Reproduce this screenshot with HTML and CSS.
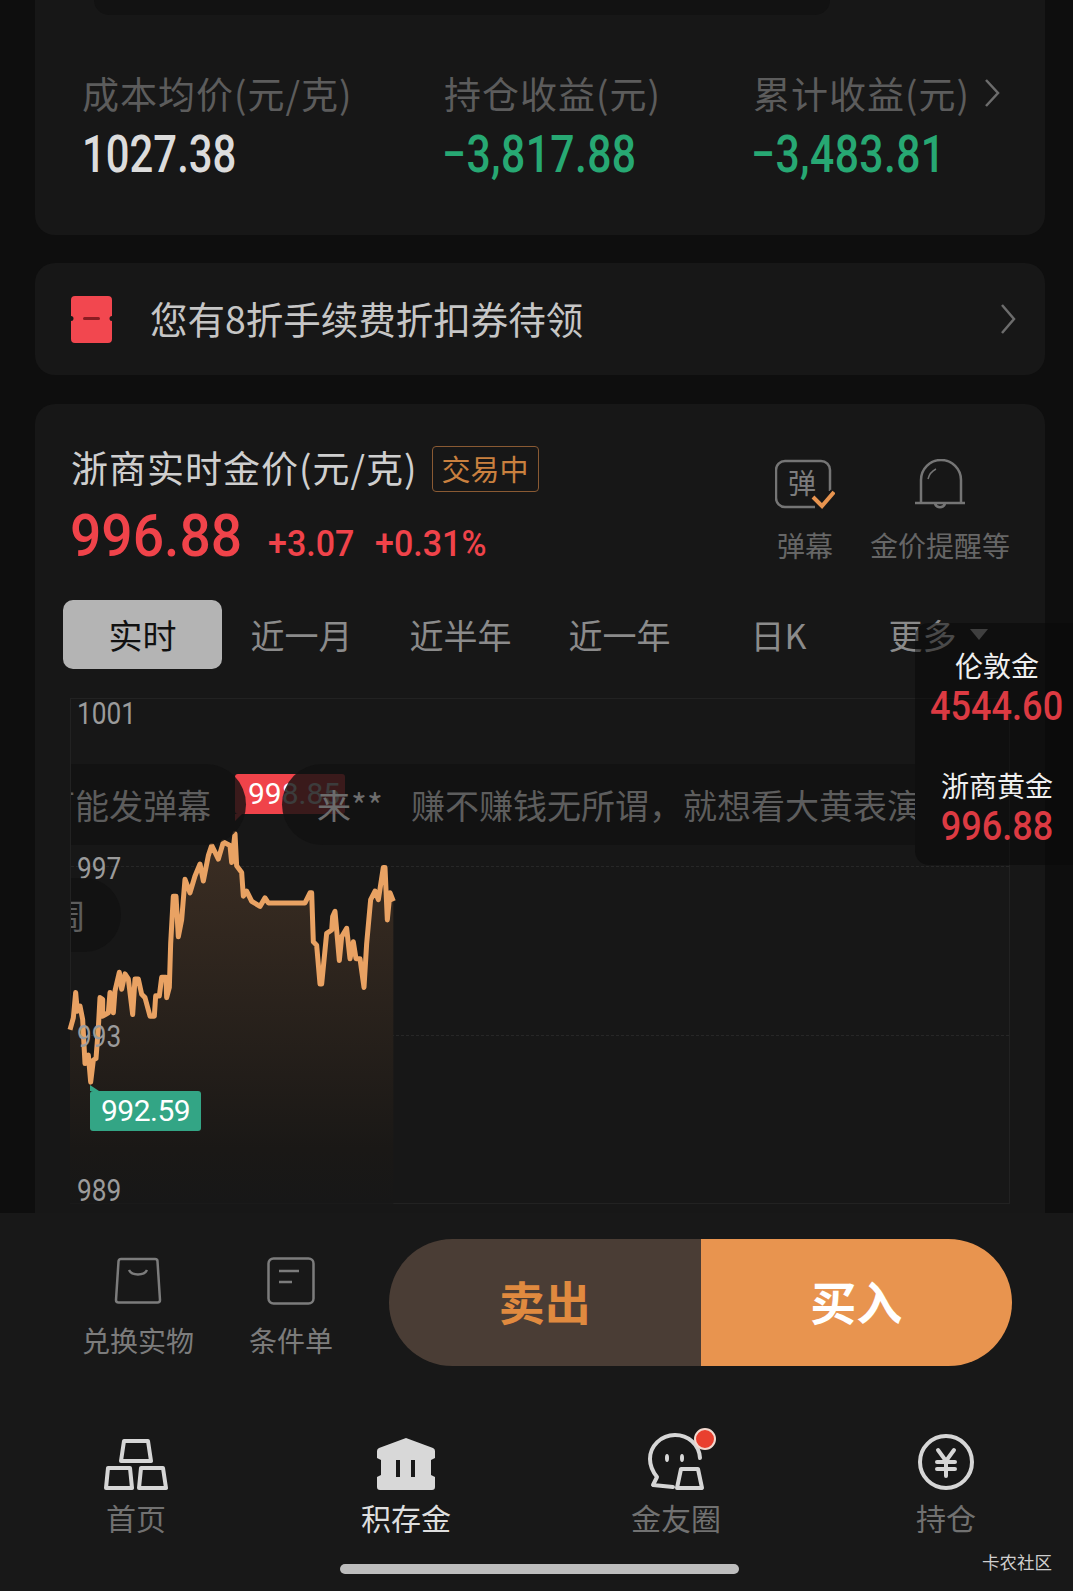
FILE: index.html
```html
<!DOCTYPE html>
<html lang="zh-CN">
<head>
  <meta charset="UTF-8">
  <meta name="viewport" content="width=device-width, initial-scale=1.0">
  <title>积存金</title>
  <link rel="stylesheet" href="styles.css">
</head>
<body>
<div class="page">

  <!-- holdings summary -->
  <div class="card summary">
    <div class="summary-top"></div>
    <div class="stats">
      <div class="stat">
        <p class="stat-label">成本均价(元/克)</p>
        <p class="stat-value"><span class="num">1027.38</span></p>
      </div>
      <div class="stat">
        <p class="stat-label">持仓收益(元)</p>
        <p class="stat-value green"><span class="num">−3,817.88</span></p>
      </div>
      <div class="stat">
        <p class="stat-label">累计收益(元)
          <svg class="stat-arrow" viewBox="0 0 16 28"><path d="M2 1l12 13L2 27"/></svg>
        </p>
        <p class="stat-value green"><span class="num">−3,483.81</span></p>
      </div>
    </div>
  </div>

  <!-- coupon banner -->
  <div class="card banner">
    <svg class="coupon" viewBox="0 0 41 47">
      <path class="coupon-body" d="M4 0h33a4 4 0 0 1 4 4v16a2.500 2.500 0 0 0 0 5v18a4 4 0 0 1-4 4H4a4 4 0 0 1-4-4V25a2.500 2.500 0 0 0 0-5V4a4 4 0 0 1 4-4z"/>
      <rect class="coupon-dash" x="12" y="21" width="17" height="3" rx="1.5"/>
    </svg>
    <span class="banner-text">您有8折手续费折扣券待领</span>
    <svg class="banner-arrow" viewBox="0 0 16 30"><path d="M2 1l12 14L2 29"/></svg>
  </div>

  <!-- realtime price -->
  <div class="card market">
    <div class="market-head">
      <div>
        <div class="title-row">
          <span class="title">浙商实时金价(元/克)</span>
          <span class="status">交易中</span>
        </div>
        <div class="price-row">
          <span class="price"><span class="num">996.88</span></span>
          <span class="change"><span class="num">+3.07</span></span>
          <span class="change"><span class="num">+0.31%</span></span>
        </div>
      </div>
      <div class="actions">
        <div class="action">
          <svg class="action-icon danmu-icon" width="60" height="52" viewBox="0 0 60 52">
            <path class="line-grey" d="M40 48H10a9 9 0 0 1-9-9V11a9 9 0 0 1 9-9h36a9 9 0 0 1 9 9v21"/>
            <text class="action-glyph" x="27" y="35" text-anchor="middle">弹</text>
            <path class="check-back" d="M38 38l9 9 12-14"/>
            <path class="check" d="M38 38l9 9 12-14"/>
          </svg>
          <span class="action-label">弹幕</span>
        </div>
        <div class="action">
          <svg class="action-icon" width="52" height="52" viewBox="0 0 52 52">
            <path class="line-grey" d="M7 44V21a20 20 0 0 1 40 0V44M1 44h50M21 45a5.500 5.500 0 0 0 10 0"/>
            <path class="line-thin" d="M14 20c1-4 4-8 8-10"/>
          </svg>
          <span class="action-label">金价提醒等</span>
        </div>
      </div>
    </div>

    <div class="tabs">
      <span class="tab active">实时</span>
      <span class="tab">近一月</span>
      <span class="tab">近半年</span>
      <span class="tab">近一年</span>
      <span class="tab">日K</span>
      <span class="tab more">更多<i class="caret"></i></span>
    </div>

    <div class="chart">
      <div class="grid-line one"></div>
      <div class="grid-line two"></div>

      <!-- viewBox is about 3x the on-screen pixels, measured from x=60 y=690 -->
      <svg class="plot" viewBox="0 0 1200 1568" preserveAspectRatio="none">
        <defs>
          <linearGradient id="areaFill" x1="0" y1="0" x2="0" y2="1">
            <stop offset="0" stop-color="#3c2e23"/>
            <stop offset="0.85" stop-color="#1a1816"/>
            <stop offset="1" stop-color="#171717"/>
          </linearGradient>
        </defs>
        <polygon fill="url(#areaFill)" points="30,1520 30,1005 40,970 47,895 52,950 60,935 68,975 75,1105 85,1080 92,1160 100,1095 108,1090 115,1000 120,910 128,915 128,965 145,955 150,895 160,955 165,890 178,835 185,885 195,840 205,855 218,960 225,855 235,855 245,900 255,910 270,965 283,965 287,905 298,905 305,850 318,850 320,910 328,880 332,750 340,610 348,610 355,730 365,680 375,560 390,600 405,550 420,515 430,565 445,490 455,460 475,500 490,450 510,460 515,510 525,425 530,520 545,540 550,610 560,595 575,625 600,640 615,615 625,630 735,630 750,600 755,600 760,745 770,755 780,870 785,870 800,720 815,710 818,670 825,655 830,710 838,800 845,730 860,705 870,795 880,745 888,795 900,795 912,880 920,750 932,620 945,595 955,620 970,525 975,525 982,680 990,600 1000,625 1000,1520"/>
        <polyline class="price-line" points="30,1005 40,970 47,895 52,950 60,935 68,975 75,1105 85,1080 92,1160 100,1095 108,1090 115,1000 120,910 128,915 128,965 145,955 150,895 160,955 165,890 178,835 185,885 195,840 205,855 218,960 225,855 235,855 245,900 255,910 270,965 283,965 287,905 298,905 305,850 318,850 320,910 328,880 332,750 340,610 348,610 355,730 365,680 375,560 390,600 405,550 420,515 430,565 445,490 455,460 475,500 490,450 510,460 515,510 525,425 530,520 545,540 550,610 560,595 575,625 600,640 615,615 625,630 735,630 750,600 755,600 760,745 770,755 780,870 785,870 800,720 815,710 818,670 825,655 830,710 838,800 845,730 860,705 870,795 880,745 888,795 900,795 912,880 920,750 932,620 945,595 955,620 970,525 975,525 982,680 990,600 1000,625"/>
      </svg>

      <span class="axis a1001"><span class="num">1001</span></span>
      <span class="axis a997"><span class="num">997</span></span>
      <span class="axis a993"><span class="num">993</span></span>
      <span class="axis a989"><span class="num">989</span></span>

      <span class="flag high">998.85</span>
      <span class="flag low">992.59</span>

      <div class="danmaku">
        <div class="bullet b1">可能发弹幕</div>
        <div class="bullet b2"><span class="bullet-user">来**</span>赚不赚钱无所谓，就想看大黄表演</div>
        <div class="bullet b3">周</div>
      </div>
    </div>

    <div class="quotes">
      <p class="quote-name">伦敦金</p>
      <p class="quote-price"><span class="num">4544.60</span></p>
      <p class="quote-name second">浙商黄金</p>
      <p class="quote-price"><span class="num">996.88</span></p>
    </div>
  </div>

  <!-- fixed footer -->
  <div class="footer">
    <div class="trade">
      <div class="tool first">
        <svg width="48" height="48" viewBox="0 0 48 48">
          <path class="line-tool" d="M7 2h34a2.500 2.500 0 0 1 2.500 2.500L46 43a2.500 2.500 0 0 1-2.500 2.500h-39A2.500 2.500 0 0 1 2 43L4.500 4.500A2.500 2.500 0 0 1 7 2z"/>
          <path class="line-tool" d="M15 13c3 6 15 6 18 0"/>
        </svg>
        <span class="tool-label">兑换实物</span>
      </div>
      <div class="tool">
        <svg width="48" height="48" viewBox="0 0 48 48">
          <rect class="line-tool" x="1.500" y="1.500" width="45" height="45" rx="5"/>
          <path class="line-tool" d="M12 14h20M12 25h13"/>
        </svg>
        <span class="tool-label">条件单</span>
      </div>
      <div class="buttons">
        <div class="btn sell">卖出</div>
        <div class="btn buy">买入</div>
      </div>
    </div>

    <div class="nav">
      <div class="nav-item">
        <svg width="64" height="52" viewBox="0 0 64 52">
          <path class="line-nav" d="M20 3h24l3 20H17zM4 30h22l2 20H2zM37 30h22l3 20H35z"/>
        </svg>
        <span class="nav-label">首页</span>
      </div>
      <div class="nav-item current">
        <svg width="58" height="52" viewBox="0 0 58 52">
          <path class="fill-nav" fill-rule="evenodd" d="M29 0l27 10q2 1 2 3v7l-4 2v15l4 2v10q0 3-3 3H3q-3 0-3-3V39l4-2V22l-4-2v-7q0-2 2-3zM19 22v17h4V22zM34 22v17h4V22z"/>
        </svg>
        <span class="nav-label">积存金</span>
      </div>
      <div class="nav-item">
        <div class="nav-icon-wrap">
          <svg width="58" height="58" viewBox="0 0 58 58">
            <path class="line-nav" d="M53 26C52 12 41 3 28 3 14 3 3 14 3 27c0 7 3 13 7 18l-4 8 20 2"/>
            <path class="line-nav" d="M34 37h17l4 19H30z"/>
            <ellipse class="fill-nav" cx="20" cy="26" rx="2" ry="4"/>
            <ellipse class="fill-nav" cx="35" cy="26" rx="2" ry="4"/>
          </svg>
          <i class="dot"></i>
        </div>
        <span class="nav-label">金友圈</span>
      </div>
      <div class="nav-item">
        <svg width="56" height="56" viewBox="0 0 56 56">
          <circle class="line-nav" cx="28" cy="28" r="26"/>
          <path class="line-nav" d="M20 16l8 11 8-11M19 28h18M19 35h18M28 27v15"/>
        </svg>
        <span class="nav-label">持仓</span>
      </div>
    </div>

    <div class="home-bar"></div>
    <span class="watermark">卡农社区</span>
  </div>

</div>
</body>
</html>
```

FILE: styles.css
```css
body {
  margin: 0;
  background-color: #0e0e0e;
  font-family: "Noto Sans CJK SC", "Noto Sans", sans-serif;
}

p {
  margin: 0;
}

.page {
  position: relative;
  width: 1073px;
  height: 1591px;
  overflow: hidden;
}

.num {
  display: inline-block;
  font-family: Roboto, sans-serif;
  transform: scaleX(0.82);
  transform-origin: left center;
}

.card {
  margin: 0 28px 0 35px;
  background-color: #171717;
  border-radius: 20px;
}

/* summary */
.summary {
  height: 235px;
  border-radius: 0 0 20px 20px;
  overflow: hidden;
}

.summary-top {
  height: 15px;
  margin: 0 215px 0 59px;
  background-color: #121212;
  border-radius: 0 0 16px 16px;
}

.stats {
  display: grid;
  grid-template-columns: 362px 309px 1fr;
  padding: 53px 0 0 47px;
}

.stat-label {
  display: flex;
  align-items: center;
  height: 50px;
  font-size: 37px;
  letter-spacing: 1px;
  line-height: 50px;
  color: #5c5c5c;
  white-space: nowrap;
}

.stat-arrow {
  width: 16px;
  height: 28px;
  margin-left: 14px;
  fill: none;
  stroke: #6c6c6c;
  stroke-width: 2.5;
}

.stat-value {
  height: 66px;
  margin-top: -1px;
  font-size: 52px;
  line-height: 66px;
  font-weight: 500;
  white-space: nowrap;
  color: #dcdcdc;
}

.stat-value .num {
  transform: scaleX(0.805);
}

.stat-value.green {
  color: #27a873;
}

.stat-value.green .num {
  margin-left: -2px;
  letter-spacing: 0.5px;
  transform: scaleX(0.82);
}

/* banner */
.banner {
  display: flex;
  align-items: center;
  height: 112px;
  margin-top: 28px;
  padding: 0 29px 0 36px;
}

.coupon {
  width: 41px;
  height: 47px;
  flex: none;
}

.coupon-body {
  fill: #f2474f;
}

.coupon-dash {
  fill: #8b1c22;
}

.banner-text {
  margin-left: 38px;
  padding-bottom: 4px;
  font-size: 37.500px;
  color: #c6c6c6;
}

.banner-arrow {
  width: 16px;
  height: 30px;
  margin-left: auto;
  fill: none;
  stroke: #6c6c6c;
  stroke-width: 2.5;
}

/* market card */
.market {
  position: relative;
  height: 809px;
  margin-top: 29px;
  border-radius: 20px 20px 0 0;
}

.market-head {
  display: flex;
  justify-content: space-between;
  height: 116px;
  padding: 40px 35px 0 36px;
}

.title-row {
  display: flex;
  align-items: center;
  height: 50px;
}

.title {
  padding-bottom: 5px;
  font-size: 37px;
  letter-spacing: 1px;
  color: #cfcfcf;
  white-space: nowrap;
}

.status {
  height: 44px;
  margin-left: 14px;
  padding: 0 9px;
  border: 1px solid #8a5a33;
  border-radius: 4px;
  font-size: 29px;
  line-height: 42px;
  color: #c9803f;
}

.price-row {
  display: flex;
  align-items: flex-end;
  height: 60px;
  margin-top: 12px;
  color: #f0434a;
  white-space: nowrap;
}

.price {
  width: 197px;
  font-size: 60px;
  line-height: 60px;
  font-weight: 500;
}

.price .num {
  margin-left: -1px;
  transform: scaleX(0.92);
}

.change {
  width: 107px;
  font-size: 37px;
  line-height: 44px;
  font-weight: 500;
}

.change .num {
  transform: scaleX(0.92);
}

.actions {
  display: flex;
  gap: 37px;
  padding-top: 15px;
}

.action {
  display: flex;
  flex-direction: column;
  align-items: center;
}

.action-icon {
  display: block;
  flex: none;
  height: 52px;
}

.danmu-icon {
  align-self: flex-start;
  margin-left: -2px;
  margin-right: -2px;
}

.action-label {
  flex: none;
  margin-top: 14px;
  font-size: 28px;
  line-height: 40px;
  color: #666;
  white-space: nowrap;
}

.action-glyph {
  font-size: 28px;
  fill: #7d7d7d;
}

.line-grey {
  fill: none;
  stroke: #757575;
  stroke-width: 2.5;
}

.line-thin {
  fill: none;
  stroke: #757575;
  stroke-width: 1.5;
}

.check-back {
  fill: none;
  stroke: #171717;
  stroke-width: 8;
}

.check {
  fill: none;
  stroke: #e8944f;
  stroke-width: 4;
}

/* tabs */
.tabs {
  display: grid;
  grid-template-columns: repeat(6, 159px);
  margin-left: 28px;
  height: 69px;
  margin-top: 40px;
}

.tab {
  position: relative;
  font-size: 34px;
  line-height: 69px;
  text-align: center;
  color: #8b8b8b;
}

.tab.more {
  padding-right: 30px;
  box-sizing: border-box;
}

.tab.active {
  background-color: #b4b4b4;
  border-radius: 10px;
  color: #111;
}

.caret {
  position: absolute;
  left: 112px;
  top: 29px;
  border-left: 9px solid transparent;
  border-right: 9px solid transparent;
  border-top: 11px solid #777;
}

/* chart */
.chart {
  position: relative;
  width: 940px;
  height: 506px;
  margin: 29px 0 0 35px;
  border: 1px solid #222;
  box-sizing: border-box;
}

.grid-line {
  position: absolute;
  left: 0;
  right: 0;
  border-top: 1px dashed #272727;
}

.grid-line.one {
  top: 167px;
}

.grid-line.two {
  top: 336px;
}

.plot {
  position: absolute;
  left: -11px;
  top: -9px;
  width: 400px;
  height: 530px;
}

.price-line {
  fill: none;
  stroke: #e9a263;
  stroke-width: 15;
  stroke-linejoin: round;
}

.axis {
  position: absolute;
  left: 6px;
  font-size: 32px;
  line-height: 36px;
  color: #9b9b9b;
}

.a1001 { top: -7px; }
.a997 { top: 148px; }
.a993 { top: 316px; }
.a989 { top: 470px; }

.flag {
  position: absolute;
  height: 40px;
  font-family: Roboto, sans-serif;
  font-size: 30px;
  line-height: 40px;
  color: #fff;
  border-radius: 3px;
}

.flag::before {
  content: "";
  position: absolute;
  left: 0;
  border-style: solid;
}

.flag.high {
  left: 164px;
  top: 75px;
  width: 110px;
  padding-left: 13px;
  box-sizing: border-box;
  background-color: #f0434a;
}

.flag.high::before {
  top: 40px;
  border-width: 7px 7px 0 0;
  border-color: #f0434a transparent transparent transparent;
}

.flag.low {
  left: 19px;
  top: 392px;
  width: 111px;
  padding-left: 11px;
  box-sizing: border-box;
  letter-spacing: -0.5px;
  background-color: #33a585;
}

.flag.low::before {
  top: -6px;
  border-width: 6px 0 0 9px;
  border-color: transparent transparent transparent #33a585;
}

.danmaku {
  position: absolute;
  left: 0;
  top: 0;
  width: 844px;
  height: 100%;
  overflow: hidden;
}

.bullet {
  position: absolute;
  height: 81px;
  box-sizing: border-box;
  background-color: rgba(17, 17, 17, 0.82);
  border-radius: 41px;
  font-size: 34px;
  line-height: 81px;
  color: #5d5d5d;
  white-space: nowrap;
}

.bullet.b1 {
  left: -100px;
  top: 65px;
  width: 275px;
  padding-left: 70px;
}

.bullet.b2 {
  left: 211px;
  top: 65px;
  width: 800px;
  padding-left: 35px;
}

.bullet-user {
  display: inline-block;
  width: 94px;
  color: #6c6c6c;
}

.bullet.b3 {
  left: -60px;
  top: 179px;
  width: 110px;
  height: 74px;
  padding-left: 41px;
  line-height: 74px;
}

/* floating quote box */
.quotes {
  position: absolute;
  left: 880px;
  right: -28px;
  top: 219px;
  height: 242px;
  padding: 20px 0 0 6px;
  box-sizing: border-box;
  background-color: rgba(8, 8, 8, 0.5);
  border-radius: 14px 0 0 14px;
  text-align: center;
}

.quote-name {
  font-size: 28px;
  line-height: 44px;
  color: #f0f0f0;
}

.quote-name.second {
  margin-top: 41px;
}

.quote-price {
  height: 40px;
  margin-top: -5px;
  font-size: 41px;
  line-height: 40px;
  font-weight: 500;
  color: #dc3a42;
}

.quote-price .num {
  transform: scaleX(0.88);
  transform-origin: center center;
}

/* footer */
.footer {
  position: relative;
  height: 378px;
  background-color: #181818;
}

.trade {
  display: flex;
  height: 219px;
  padding: 26px 0 0 82px;
  box-sizing: border-box;
}

.tool {
  display: flex;
  flex-direction: column;
  align-items: center;
  margin-left: 55px;
  padding-top: 18px;
}

.tool.first {
  margin-left: 0;
}

.tool-label {
  margin-top: 15px;
  font-size: 28px;
  line-height: 40px;
  color: #7c7c7c;
  white-space: nowrap;
}

.line-tool {
  fill: none;
  stroke: #7c7c7c;
  stroke-width: 2.5;
}

.buttons {
  display: flex;
  width: 623px;
  height: 127px;
  margin-left: 56px;
  border-radius: 64px;
  overflow: hidden;
  font-size: 46px;
  font-weight: 700;
  line-height: 122px;
  text-align: center;
}

.btn {
  flex: 1;
}

.sell {
  background-color: #4a3d35;
  color: #e08a3f;
}

.buy {
  background-color: #e8944f;
  color: #fff;
}

.nav {
  display: grid;
  grid-template-columns: repeat(4, 270px);
  padding-left: 1px;
}

.nav-item {
  display: flex;
  flex-direction: column;
  align-items: center;
  justify-content: flex-end;
  height: 105px;
}

.nav-icon-wrap {
  position: relative;
  height: 58px;
}

.nav-label {
  margin-top: 7px;
  font-size: 30px;
  line-height: 40px;
  color: #717171;
}

.current .nav-label {
  color: #dedede;
}

.line-nav {
  fill: none;
  stroke: #d6d6d6;
  stroke-width: 4;
  stroke-linejoin: round;
  stroke-linecap: round;
}

.fill-nav {
  fill: #d8d8d8;
}

.dot {
  position: absolute;
  left: 47px;
  top: -4px;
  width: 18px;
  height: 18px;
  background-color: #e9402f;
  border: 2px solid #f3d8cf;
  border-radius: 50%;
}

.home-bar {
  width: 399px;
  height: 10px;
  margin: 27px 0 0 340px;
  background-color: #bdbdbd;
  border-radius: 5px;
}

.watermark {
  position: absolute;
  right: 21px;
  bottom: 17px;
  font-size: 17.500px;
  line-height: 24px;
  color: #cfcfcf;
}
```
